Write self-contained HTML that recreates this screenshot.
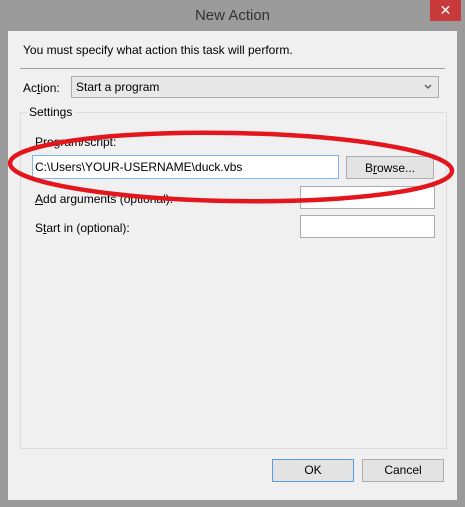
<!DOCTYPE html>
<html><head><style>
*{margin:0;padding:0;box-sizing:border-box}
body{width:465px;height:507px;background:#9b9b9b;position:relative;overflow:hidden;font-family:"Liberation Sans",sans-serif;font-size:12px;color:#000}
.a{position:absolute}
.title{left:0;top:7px;width:465px;text-align:center;font-size:15px;color:#333}
.close{left:430px;top:0;width:31px;height:21px;background:#c7393b;color:#fff;text-align:center;font-size:14px;line-height:21px}
.client{left:8px;top:31px;width:449px;height:469px;background:#f0f0f0}
.box{background:#fff;border:1px solid #acacac}
.btn{background:#e3e3e3;border:1px solid #adadad;text-align:center;line-height:20px}
</style></head><body>
<div class="a title">New Action</div>
<div class="a close">✕</div>
<div class="a client"></div>
<div class="a" style="left:23px;top:43px">You must specify what action this task will perform.</div>
<div class="a" style="left:20px;top:68px;width:425px;height:1px;background:#a0a0a0"></div>
<div class="a" style="left:23px;top:81px">Ac<u>t</u>ion:</div>
<div class="a" style="left:71px;top:76px;width:368px;height:22px;background:#e8e8e8;border:1px solid #acacac;padding:3px 0 0 4px">Start a program<svg style="position:absolute;right:6px;top:7px" width="8" height="6"><path d="M1 1L4 4L7 1" fill="none" stroke="#555" stroke-width="1.3"/></svg></div>
<div class="a" style="left:20px;top:112px;width:427px;height:337px;border:1px solid #dcdcdc"></div>
<div class="a" style="left:26px;top:105px;background:#f0f0f0;padding:0 3px">Settings</div>
<div class="a" style="left:35px;top:135px">Program/script:</div>
<div class="a box" style="left:32px;top:155px;width:307px;height:24px;border-color:#7eb4ea;padding:4px 0 0 2px">C:\Users\YOUR-USERNAME\duck.vbs</div>
<div class="a btn" style="left:346px;top:156px;width:88px;height:23px;line-height:22px">B<u>r</u>owse...</div>
<div class="a" style="left:35px;top:192px"><u>A</u>dd arguments (optional):</div>
<div class="a box" style="left:300px;top:186px;width:135px;height:23px"></div>
<div class="a" style="left:35px;top:221px">S<u>t</u>art in (optional):</div>
<div class="a box" style="left:300px;top:215px;width:135px;height:23px"></div>
<div class="a btn" style="left:272px;top:459px;width:82px;height:23px;border-color:#569de5">OK</div>
<div class="a btn" style="left:362px;top:459px;width:82px;height:23px">Cancel</div>
<svg class="a" style="left:0;top:0" width="465" height="507"><ellipse cx="231" cy="167" rx="221" ry="34" fill="none" stroke="#e3161d" stroke-width="4.5" transform="rotate(1 231 167)"/></svg>
</body></html>
